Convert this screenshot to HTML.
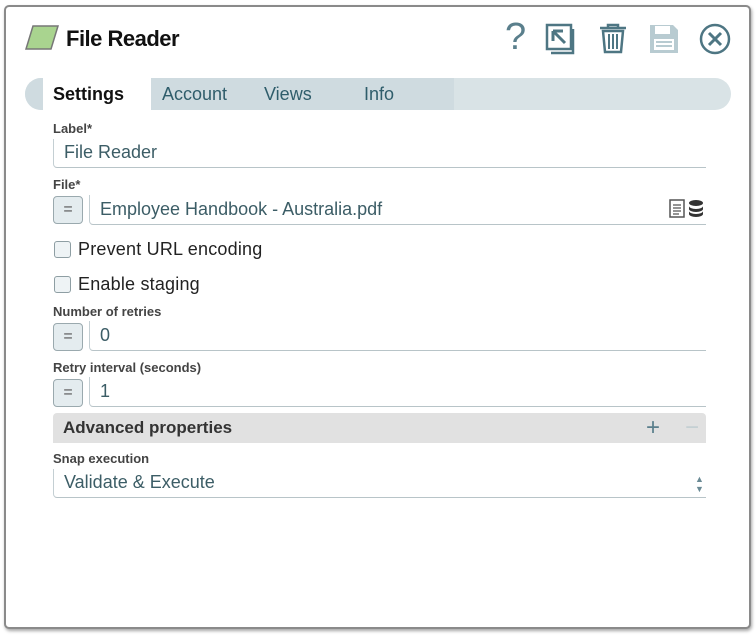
<!DOCTYPE html>
<html><head><style>
*{box-sizing:border-box;margin:0;padding:0}
body{width:756px;height:636px;background:#fff;font-family:"Liberation Sans",sans-serif;position:relative;overflow:hidden}
.frame{position:absolute;left:4px;top:5px;width:747px;height:624px;border:2px solid #8a8a8a;border-radius:5px;box-shadow:1px 2px 3px rgba(0,0,0,.35);background:#fff}
.a{position:absolute}
.title{left:66px;top:26px;font-size:22px;font-weight:bold;color:#111;letter-spacing:-0.5px}
.tabs{left:25px;top:78px;width:706px;height:32px;background:#d9e3e6;border-radius:16px;overflow:hidden}
.tab{position:absolute;top:0;height:32px;line-height:32px;font-size:18px;color:#2f5d6b}
.lbl{font-size:13px;font-weight:bold;color:#444;left:53px}
.inp{border-left:1px solid #c4cfd3;border-bottom:1px solid #b8c4c8;border-radius:0 0 0 4px;font-size:18px;color:#3c5d66;padding-left:10px}
.eq{width:30px;height:28px;border:1px solid #9aa9ae;border-radius:4px;background:#e4ecef;color:#555;text-align:center;line-height:26px;font-size:16px}
.cb{width:17px;height:17px;border:1.5px solid #8e9ea3;border-radius:3px;background:#eef3f5;left:54px}
.ct{font-size:18px;color:#222;left:78px;letter-spacing:0.2px}
</style></head><body>
<div class="frame"></div>
<svg class="a" style="left:24px;top:24px" width="36" height="28"><polygon points="9,2 34,2 27,25 2,25" fill="#a9d48f" stroke="#777" stroke-width="1.5"/></svg>
<div class="a title">File Reader</div>
<div class="a" style="left:505px;top:16px;font-size:38px;color:#5a7f8c">?</div>
<svg class="a" style="left:545px;top:23px" width="34" height="32"><rect x="2" y="2" width="24" height="24" fill="none" stroke="#4e7683" stroke-width="2.5"/><path d="M8 8v10M8 8h10M8 8l12 12" stroke="#4e7683" stroke-width="3" fill="none"/><path d="M28 6v24H6" stroke="#4e7683" stroke-width="2.5" fill="none"/></svg>
<svg class="a" style="left:597px;top:22px" width="32" height="32"><path d="M3 6h26M11 6V3h10v3" stroke="#4e7683" stroke-width="2.5" fill="none"/><path d="M6 9h20l-2 21H8z" fill="none" stroke="#4e7683" stroke-width="2.5"/><path d="M12 12v15M16 12v15M20 12v15" stroke="#4e7683" stroke-width="2"/></svg>
<svg class="a" style="left:648px;top:23px" width="32" height="32"><path d="M2 2h23l5 5v23H2z" fill="#b8cbd1"/><rect x="7" y="3" width="15" height="8" fill="#fff"/><rect x="6" y="16" width="20" height="11" fill="#fff"/><path d="M8 19h16M8 23h16" stroke="#b8cbd1" stroke-width="2"/></svg>
<svg class="a" style="left:699px;top:23px" width="34" height="34"><circle cx="16" cy="16" r="14" fill="none" stroke="#4e7683" stroke-width="2.5"/><path d="M10 10l12 12M22 10L10 22" stroke="#4e7683" stroke-width="3"/></svg>
<div class="a tabs">
<div style="position:absolute;left:0;top:0;width:429px;height:32px;background:#cfdbe0"></div>
<div class="tab" style="left:18px;width:108px;background:#fff;color:#111;font-weight:bold;padding-left:10px">Settings</div>
<div class="tab" style="left:137px">Account</div>
<div class="tab" style="left:239px">Views</div>
<div class="tab" style="left:339px">Info</div>
</div>
<div class="a lbl" style="top:121px">Label*</div>
<div class="a inp" style="left:53px;top:139px;width:653px;height:29px;line-height:27px">File Reader</div>
<div class="a lbl" style="top:177px">File*</div>
<div class="a eq" style="left:53px;top:196px">=</div>
<div class="a inp" style="left:89px;top:195px;width:617px;height:30px;line-height:28px">Employee Handbook - Australia.pdf</div>
<svg class="a" style="left:669px;top:199px" width="36" height="20"><rect x="1" y="1" width="14" height="17" fill="#fff" stroke="#555" stroke-width="1.5"/><path d="M4 6h8M4 9h8M4 12h8M4 15h6" stroke="#555" stroke-width="1.2"/><ellipse cx="27" cy="4" rx="7" ry="3" fill="#333"/><path d="M20 7a7 3 0 0 0 14 0v3a7 3 0 0 1-14 0zM20 12a7 3 0 0 0 14 0v3a7 3 0 0 1-14 0z" fill="#333"/></svg>
<div class="a cb" style="top:241px"></div>
<div class="a ct" style="top:239px">Prevent URL encoding</div>
<div class="a cb" style="top:276px"></div>
<div class="a ct" style="top:274px">Enable staging</div>
<div class="a lbl" style="top:304px">Number of retries</div>
<div class="a eq" style="left:53px;top:323px">=</div>
<div class="a inp" style="left:89px;top:321px;width:617px;height:30px;line-height:28px">0</div>
<div class="a lbl" style="top:360px">Retry interval (seconds)</div>
<div class="a eq" style="left:53px;top:379px">=</div>
<div class="a inp" style="left:89px;top:377px;width:617px;height:30px;line-height:28px">1</div>
<div class="a" style="left:53px;top:413px;width:653px;height:30px;background:#e1e1e1;border-radius:4px 4px 0 0"></div>
<div class="a" style="left:63px;top:418px;font-size:17px;font-weight:bold;color:#333">Advanced properties</div>
<div class="a" style="left:646px;top:414px;font-size:24px;color:#5a7f8c">+</div>
<div class="a" style="left:685px;top:414px;font-size:24px;color:#c4cfd3">−</div>
<div class="a lbl" style="top:451px">Snap execution</div>
<div class="a inp" style="left:53px;top:469px;width:653px;height:29px;line-height:27px">Validate &amp; Execute</div>
<div class="a" style="left:695px;top:474px;font-size:9px;line-height:10px;color:#6a8a95">▲<br>▼</div>
</body></html>
